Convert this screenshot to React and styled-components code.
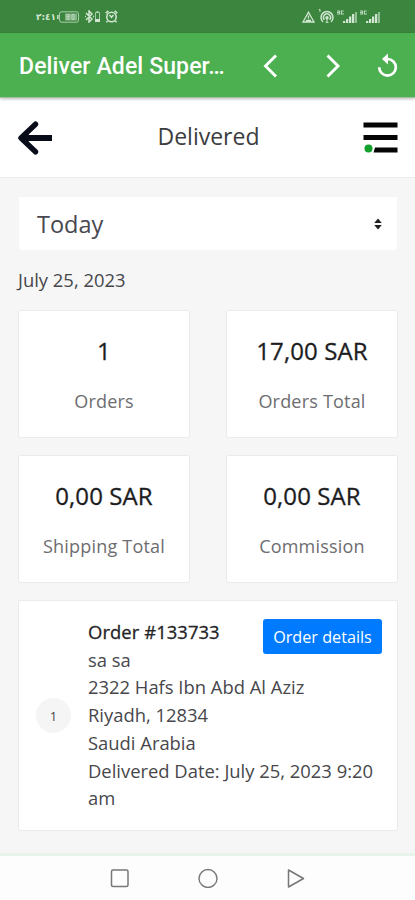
import React from "react";
import styled, { createGlobalStyle } from "styled-components";

const Global = createGlobalStyle`
  * { box-sizing: border-box; }
  body { margin: 0; background: #f6f6f6; }
  button, select { font: inherit; }
`;

const Screen = styled.div`
  width: 415px;
  height: 900px;
  display: flex;
  flex-direction: column;
  overflow: hidden;
  background: #f6f6f6;
  color: #47474b;
  font-family: "Open Sans", "Noto Sans", sans-serif;
`;

const StatusBar = styled.div`
  height: 33px;
  flex: none;
  background: #3b853e;
  display: flex;
  justify-content: space-between;
  padding: 0 35px 0 36px;
`;

const StatusGroup = styled.div`
  display: flex;
  align-items: center;
  gap: ${(p) => p.$gap}px;
  color: #d0e6d0;
`;

const Clock = styled.span`
  width: 17px;
  font: 700 9px/12px "DejaVu Sans", sans-serif;
  white-space: nowrap;
  letter-spacing: -1.2px;
  direction: ltr;
  unicode-bidi: bidi-override;
`;

const AppBar = styled.header`
  height: 65px;
  flex: none;
  background: #4caf50;
  border-bottom: 1px solid #9fc3a0;
  color: #fff;
  display: flex;
  align-items: center;
  padding: 2px 16px 0 19px;
  box-shadow: 0 1px 3px rgba(0, 0, 0, 0.28);
  z-index: 1;
`;

const AppTitle = styled.h1`
  margin: 0;
  width: 207px;
  padding-top: 2px;
  font: 500 23px/30px Roboto, sans-serif;
  letter-spacing: 0.12px;
  white-space: nowrap;
`;

const AppActions = styled.div`
  flex: 1;
  display: grid;
  grid-template-columns: 62px 1fr 24px;
  align-items: center;
  padding-left: 33px;
`;

const IconButton = styled.button`
  border: 0;
  padding: 0;
  background: none;
  color: inherit;
  display: flex;
`;

const PageHeader = styled.div`
  height: 80px;
  flex: none;
  background: #fff;
  border-bottom: 1px solid #ececec;
  display: flex;
  align-items: center;
  justify-content: space-between;
  padding: 1px 17px 0 18px;
`;

const PageTitle = styled.h2`
  margin: 0;
  padding-bottom: 4px;
  font-size: 23px;
  font-weight: 400;
  line-height: 32px;
  color: #3d3d40;
`;

const Content = styled.main`
  flex: 1;
  padding: 19px 18px 0;
`;

const Select = styled.div`
  height: 53px;
  margin-left: 1px;
  background: #fff;
  border-radius: 2px;
  display: flex;
  align-items: center;
  justify-content: space-between;
  padding: 0 15px 0 18px;
  font-size: 23.5px;
  color: #47474f;
`;

const DateLabel = styled.p`
  margin: 17px 0 17px;
  font-size: 18.4px;
  line-height: 26px;
`;

const Stats = styled.div`
  display: grid;
  grid-template-columns: 172px 172px;
  grid-auto-rows: 128px;
  justify-content: space-between;
  row-gap: 17px;
  margin-right: -1px;
`;

const Card = styled.section`
  background: #fff;
  border: 1px solid #ebebeb;
  border-radius: 2px;
`;

const StatCard = styled(Card)`
  display: flex;
  flex-direction: column;
  align-items: center;
  padding-top: 23px;
`;

const StatValue = styled.strong`
  font-size: 24px;
  line-height: 34px;
  font-weight: 400;
  -webkit-text-stroke: 0.3px currentColor;
  letter-spacing: 0.1px;
  color: #1d1d1f;
`;

const StatLabel = styled.span`
  margin-top: 20px;
  font-size: 18px;
  line-height: 26px;
  letter-spacing: 0.2px;
  color: #6d6d70;
`;

const OrderCard = styled(Card)`
  position: relative;
  height: 231px;
  margin: 17px -1px 0 0;
  display: flex;
  align-items: center;
  padding: 0 15px 0 17px;
`;

const Count = styled.span`
  width: 35px;
  height: 35px;
  flex: none;
  border-radius: 50%;
  background: #f5f5f5;
  display: flex;
  align-items: center;
  justify-content: center;
  font-size: 13px;
`;

const OrderText = styled.div`
  margin-left: 17px;
  padding-bottom: 1px;
  flex: 1;
  font-size: 18.4px;
  line-height: 27.75px;
  white-space: nowrap;
`;

const OrderNumber = styled.div`
  font-weight: 500;
  -webkit-text-stroke: 0.3px currentColor;
  letter-spacing: 0.08px;
  color: #242426;
`;

const ButtonSlot = styled.div`
  position: absolute;
  top: 18px;
  right: 15px;
  display: flex;
`;

const DetailsButton = styled.button`
  width: 119px;
  height: 35px;
  border: 0;
  border-radius: 3px;
  padding: 0;
  background: #007bff;
  color: #fff;
  font-size: 16.2px;
  line-height: 34px;
  white-space: nowrap;
`;

const NavBar = styled.nav`
  height: 47px;
  flex: none;
  background: #fdfdfd;
  border-top: 3px solid #e8f3ec;
  display: flex;
  justify-content: space-between;
  align-items: center;
  padding: 0 109px 1px 109px;
  color: #777;
`;

const Signal = () => (
  <svg width="20" height="14" viewBox="0 0 20 14" fill="currentColor">
    <path d="M0 .5h3v4H0v-1h2V3H0V2h2v-.5H0zM3.8 .5h3v1H5v2h2v1H3.8z" opacity=".85" />
    <path d="M6 11h2.300v2H6zM9 9h2.300v4H9zM12 6.500h2.300V13H12zM15 4h2.300v9H15z" />
    <path d="M18 2h2v11h-2z" opacity=".6" />
  </svg>
);

const stats = [
  ["1", "Orders"],
  ["17,00 SAR", "Orders Total"],
  ["0,00 SAR", "Shipping Total"],
  ["0,00 SAR", "Commission"],
];

const orderLines = [
  "sa sa",
  "2322 Hafs Ibn Abd Al Aziz",
  "Riyadh, 12834",
  "Saudi Arabia",
  "Delivered Date: July 25, 2023 9:20",
  "am",
];

export default function App() {
  return (
    <Screen>
      <Global />
      <StatusBar>
        <StatusGroup $gap={4}>
          <Clock>٢:٤١</Clock>
          <svg width="24" height="12" viewBox="0 0 24 12" fill="none" stroke="currentColor">
            <rect x="2.5" y=".8" width="19" height="10.4" rx="2" opacity=".75" />
            <path d="M.8 4v4" strokeWidth="1.5" />
            <rect x="8" y="2.5" width="12" height="7" fill="currentColor" stroke="none" opacity=".5" />
            <path d="M10 3.5h2v2h-2zM10 5.5v3h2v-3M15 3.5h2v5h-2z" opacity=".8" strokeWidth=".8" />
          </svg>
          <svg width="16" height="13" viewBox="0 0 16 13" fill="none" stroke="currentColor" strokeWidth="1.5">
            <path d="m1 3 6 6-3 3V1l3 3-6 6M0 6.5h1M8 6.5h1" />
            <path d="M10.5 2.5h4v9h-4zM11.5 1.5h2" strokeWidth="1" opacity=".75" />
            <path d="M10 9h5v3h-5z" fill="currentColor" stroke="none" />
          </svg>
          <svg width="13" height="13" viewBox="0 0 13 13" fill="none" stroke="currentColor" strokeWidth="1.6">
            <circle cx="6.5" cy="7" r="4.7" />
            <path d="M.7 3.2 3.4.9M12.3 3.2 9.6.9M4.5 5l2 2.3L8.5 5M2.5 11l-1 1.4M10.5 11l1 1.4" />
          </svg>
        </StatusGroup>
        <StatusGroup $gap={3}>
          <svg width="13" height="12" viewBox="0 0 13 12" fill="none" stroke="currentColor" strokeWidth="1.3">
            <path d="M6.5 1.2 12 11H1zM6.5 4.5v3M6.5 8.5v1.2M4 9.5h5" />
          </svg>
          <svg width="16" height="15" viewBox="0 0 16 15" fill="none" stroke="currentColor" strokeWidth="1.5">
            <path d="M5 13a6 6 0 1 1 8 0M6.4 10.8a3.5 3.5 0 1 1 5.2 0" />
            <circle cx="9" cy="8.7" r="1" fill="currentColor" />
            <path d="M9 9v4M7.5 13.3h3M1 .5h1V3" strokeWidth="1" />
          </svg>
          <Signal />
          <Signal />
        </StatusGroup>
      </StatusBar>

      <AppBar>
        <AppTitle>Deliver Adel Super…</AppTitle>
        <AppActions>
          <IconButton aria-label="Back">
            <svg width="24" height="24" viewBox="0 0 24 24" fill="none" stroke="currentColor" strokeWidth="2.9">
              <path d="M17 1.5 6.5 12 17 22.5" />
            </svg>
          </IconButton>
          <IconButton aria-label="Forward">
            <svg width="24" height="24" viewBox="0 0 24 24" fill="none" stroke="currentColor" strokeWidth="2.9">
              <path d="M6.5 1.5 17 12 6.5 22.5" />
            </svg>
          </IconButton>
          <IconButton aria-label="Reload">
            <svg width="24" height="26" viewBox="0 0 24 26" fill="none" stroke="currentColor" strokeWidth="2.7">
              <path d="M11 6H12.5A8.300 8.300 0 1 1 4.2 14.3" />
              <path d="M13 .5v11L7 6z" fill="currentColor" stroke="none" />
            </svg>
          </IconButton>
        </AppActions>
      </AppBar>

      <PageHeader>
        <IconButton aria-label="Previous page">
          <svg width="36" height="34" viewBox="0 0 36 34" fill="none" stroke="#080c18" strokeLinecap="round" strokeWidth="5.4">
            <path d="M17.5 3.2 3 17l14.5 13.8" strokeLinejoin="round" />
            <path d="M5 17h29" strokeLinecap="butt" strokeWidth="6" />
            <path d="M3 17l7-5v10z" fill="#080c18" strokeWidth="1" />
          </svg>
        </IconButton>
        <PageTitle>Delivered</PageTitle>
        <IconButton aria-label="Menu">
          <svg width="35" height="34" viewBox="0 0 35 34">
            <path d="M.5 1.500h34v5H.5zM.5 14h34v5H.5zM12 26.500h22.500v5H10.500z" fill="#050505" />
            <circle cx="5.5" cy="27.5" r="4" fill="#14a02c" />
          </svg>
        </IconButton>
      </PageHeader>

      <Content>
        <Select>
          Today
          <svg width="8" height="12" viewBox="0 0 8 12" fill="#222">
            <path d="M4 .5 7.8 5H.2zM.2 7h7.600L4 11.5z" />
          </svg>
        </Select>
        <DateLabel>July 25, 2023</DateLabel>
        <Stats>
          {stats.map(([value, label]) => (
            <StatCard key={label}>
              <StatValue>{value}</StatValue>
              <StatLabel>{label}</StatLabel>
            </StatCard>
          ))}
        </Stats>
        <OrderCard>
          <Count>1</Count>
          <OrderText>
            <OrderNumber>Order #133733</OrderNumber>
            {orderLines.map((line) => (
              <div key={line}>{line}</div>
            ))}
          </OrderText>
          <ButtonSlot>
            <DetailsButton>Order details</DetailsButton>
          </ButtonSlot>
        </OrderCard>
      </Content>

      <NavBar>
        <svg width="20" height="20" viewBox="0 0 20 20" fill="none" stroke="currentColor" strokeWidth="1.5">
          <rect x="2.5" y="2" width="16.5" height="16.5" rx="1.5" />
        </svg>
        <svg width="20" height="20" viewBox="0 0 20 20" fill="none" stroke="currentColor" strokeWidth="1.4">
          <circle cx="10" cy="10.5" r="9" />
        </svg>
        <svg width="20" height="20" viewBox="0 0 20 20" fill="none" stroke="currentColor" strokeWidth="1.5" strokeLinejoin="round">
          <path d="M2.5 2v17L17.5 10.5z" />
        </svg>
      </NavBar>
    </Screen>
  );
}
